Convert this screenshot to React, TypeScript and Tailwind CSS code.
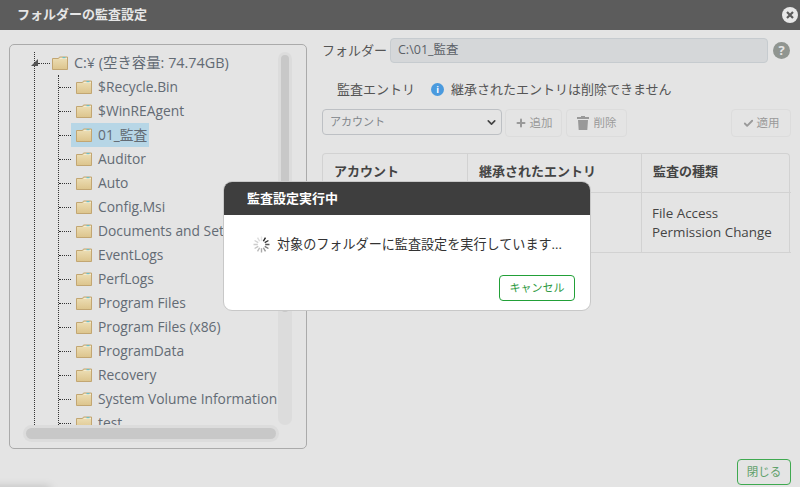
import React from "react";
import { Check, ChevronDown, Plus } from "lucide-react";

const font = { fontFamily: '"Open Sans","Noto Sans CJK JP",sans-serif' };

function Folder() {
  return (
    <svg width="16" height="14" viewBox="0 0 16 14" className="shrink-0">
      <defs>
        <linearGradient id="fg" x1="0" y1="0" x2="0" y2="1">
          <stop offset="0" stopColor="#eee0b8" />
          <stop offset="1" stopColor="#dcc48c" />
        </linearGradient>
      </defs>
      <path d="M0.5 2.5h6l1-1.5h8v12.5h-15z" fill="url(#fg)" stroke="#c2a672" />
      <path d="M8 2.5h7" stroke="#f4ecd4" />
      <rect x="10.5" y="1" width="3" height="1.2" fill="#6cc0c8" />
    </svg>
  );
}

const folders = [
  "$Recycle.Bin",
  "$WinREAgent",
  "01_監査",
  "Auditor",
  "Auto",
  "Config.Msi",
  "Documents and Settings",
  "EventLogs",
  "PerfLogs",
  "Program Files",
  "Program Files (x86)",
  "ProgramData",
  "Recovery",
  "System Volume Information",
  "test",
];

function Row({ name }: { name: string }) {
  const selected = name === "01_監査";
  return (
    <div className="flex h-6 items-center whitespace-nowrap">
      <div className="w-[12px] shrink-0 border-t border-dotted border-[#333]" />
      <div
        className={`flex h-6 items-center gap-[6px] pl-[5px] pr-[2px] ${selected ? "bg-[#b7d6e6]" : ""}`}
      >
        <Folder />
        <span className="text-[13.8px] text-[#636b74]">{name}</span>
      </div>
    </div>
  );
}

function Tree() {
  return (
    <div className="relative ml-[9px] mt-[14px] h-[405px] w-[298px] shrink-0 overflow-hidden rounded-[5px] border border-[#aaaaaa]">
      <div className="h-[380px] overflow-hidden pl-[24px] pt-[6px]">
        <div className="flex h-6 items-center whitespace-nowrap pl-[4px]">
          <div className="mr-[2px] w-[12px] border-t border-dotted border-[#333]" />
          <Folder />
          <span className="ml-[6px] text-[14.4px] text-[#636b74]">C:¥ (空き容量: 74.74GB)</span>
        </div>
        <div className="ml-[24px] border-l border-dotted border-[#333]">
          {folders.map((f) => (
            <Row key={f} name={f} />
          ))}
        </div>
      </div>
      {/* tree's root guide line and expander */}
      <div className="absolute left-[24px] top-[7px] h-[373px] border-l border-dotted border-[#333]" />
      <div className="absolute left-[21px] top-[14px] h-0 w-0 border-b-[7px] border-l-[7px] border-b-[#555] border-l-transparent" />
      {/* scrollbars */}
      <div className="absolute right-[14px] top-[7px] h-[373px] w-[14px] rounded-full bg-[#dcdcdc] p-[3px]">
        <div className="h-[257px] rounded-full bg-[#c8c8c8]" />
      </div>
      <div className="absolute bottom-[6px] left-[13px] h-[17px] w-[256px] rounded-full bg-[#dcdcdc] p-[3px]">
        <div className="h-[11px] rounded-full bg-[#c8c8c8]" />
      </div>
    </div>
  );
}

function GhostButton({ icon, label, className }: { icon: React.ReactNode; label: string; className: string }) {
  return (
    <div
      className={`flex h-7 items-center justify-center gap-[3px] rounded border border-[#dcdcdc] text-[11.5px] text-[#9a9a9a] ${className}`}
    >
      {icon}
      <span>{label}</span>
    </div>
  );
}

function Right() {
  return (
    <div className="ml-[15px] mr-[9px] flex min-w-0 flex-1 flex-col pt-[8px]">
      <div className="flex h-[25px] items-center">
        <span className="w-[68px] shrink-0 text-[13px] text-[#555]">フォルダー</span>
        <div className="flex h-[25px] w-[378px] items-center rounded border border-[#c6cbcf] bg-[#d5d7d9] pl-[7px] text-[12.5px] text-[#5c6167]">
          C:\01_監査
        </div>
        <div className="ml-[5px] flex h-[17px] w-[17px] items-center justify-center rounded-full bg-[#909590] text-[13px] font-bold leading-none text-[#e4e4e4]">
          ?
        </div>
      </div>
      <div className="mt-[17px] flex h-[19px] items-center pl-[15px] text-[13px] text-[#555]">
        <span className="w-[94px]">監査エントリ</span>
        <span className="mr-[7px] flex h-[13px] w-[13px] items-center justify-center rounded-full bg-[#4a9ade] text-[9px] font-bold leading-none text-white">
          i
        </span>
        <span>継承されたエントリは削除できません</span>
      </div>
      <div className="mt-[10px] flex items-start">
        <div className="flex h-[26px] w-[180px] items-center justify-between rounded border border-[#bdc0c4] bg-[#e4e4e4] pl-[7px] pr-[3px] text-[11px] text-[#80858a]">
          <span>アカウント</span>
          <ChevronDown size={13} strokeWidth={3} className="text-[#444]" />
        </div>
        <GhostButton
          className="ml-[3px] w-[57px]"
          icon={<Plus size={12} strokeWidth={4} className="text-[#999]" />}
          label="追加"
        />
        <GhostButton
          className="ml-[4px] w-[61px]"
          icon={
            <svg width="12" height="14" viewBox="0 0 12 14" className="mr-[2px]">
              <path d="M4 0h4v1h4v2H0V1h4zM1 4h10l-.7 10H1.7z" fill="#999" />
            </svg>
          }
          label="削除"
        />
        <GhostButton
          className="ml-auto w-[60px]"
          icon={<Check size={11} strokeWidth={4} className="text-[#999]" />}
          label="適用"
        />
      </div>
      <div className="mt-[16px] grid w-[468px] grid-cols-[145px_174px_149px] grid-rows-[39px_60px] rounded-t border-x border-t border-[#d2d2d2] text-[13px] text-[#444]">
        <div className="flex items-center border-b border-r border-[#d2d2d2] pb-[2px] pl-[11px] font-bold">アカウント</div>
        <div className="flex items-center border-b border-r border-[#d2d2d2] pb-[2px] pl-[11px] font-bold">継承されたエントリ</div>
        <div className="flex items-center border-b border-[#d2d2d2] pb-[2px] pl-[11px] font-bold">監査の種類</div>
        <div className="border-b border-r border-[#d2d2d2]" />
        <div className="border-b border-r border-[#d2d2d2]" />
        <div className="flex flex-col justify-center border-b border-[#d2d2d2] pl-[10px] text-[13.4px] leading-[19px]">
          <span>File Access</span>
          <span>Permission Change</span>
        </div>
      </div>
    </div>
  );
}

export default function App() {
  return (
    <div style={font} className="relative flex h-[487px] w-[800px] flex-col overflow-hidden bg-[#e4e4e4]">
      <header className="flex h-[30px] shrink-0 items-center justify-between bg-[#5c5c5c] pl-[17px] pr-[2px]">
        <span className="text-[13px] font-bold text-[#e6e6e6]">フォルダーの監査設定</span>
        <div className="flex h-4 w-4 items-center justify-center rounded-full bg-[#e8e8e8]">
          <svg width="8" height="8" viewBox="0 0 8 8">
            <path d="M1 1l6 6M7 1l-6 6" stroke="#5c5c5c" strokeWidth="2.2" />
          </svg>
        </div>
      </header>
      <main className="flex min-h-0 flex-1">
        <Tree />
        <Right />
      </main>
      <footer className="flex h-[28px] shrink-0 items-start justify-end pr-[9px]">
        <div className="flex h-[26px] w-[54px] items-center justify-center rounded border border-[#3fa950] text-[11.5px] text-[#5fa06a]">
          閉じる
        </div>
      </footer>

      {/* faint shadow at the bottom-left corner */}
      <div className="absolute -bottom-[6px] -left-[10px] h-[6px] w-[60px] bg-black/20 blur-[4px]" />

      {/* modal */}
      <div className="absolute left-[223px] top-[181px] flex h-[130px] w-[368px] flex-col overflow-hidden rounded-[9px] border border-[#c8c8c8] bg-white">
        <div className="flex h-[33px] shrink-0 items-center bg-[#3e3e3e] pl-[23px] text-[13px] font-bold text-white">
          監査設定実行中
        </div>
        <div className="mt-[20px] flex items-center pl-[29px] text-[13.1px] text-[#333]">
          <svg width="17" height="17" viewBox="0 0 16 16" className="mr-[7px] shrink-0">
            {[...Array(12)].map((_, i) => (
              <line
                key={i}
                x1="8"
                y1="0.5"
                x2="8"
                y2="4.5"
                stroke={["#222", "#333", "#555", "#777", "#999", "#aaa", "#bbb", "#c4c4c4", "#ccc", "#d2d2d2", "#ddd", "#e4e4e4"][(i + 11) % 12]}
                strokeWidth="1.3"
                transform={`rotate(${i * 30} 8 8)`}
              />
            ))}
          </svg>
          <span>対象のフォルダーに監査設定を実行しています...</span>
        </div>
        <div className="mt-auto flex justify-end pb-[9px] pr-[15px]">
          <div className="flex h-[26px] w-[76px] items-center justify-center rounded border border-[#22a038] text-[11px] text-[#2e9a42]">
            キャンセル
          </div>
        </div>
      </div>
    </div>
  );
}
